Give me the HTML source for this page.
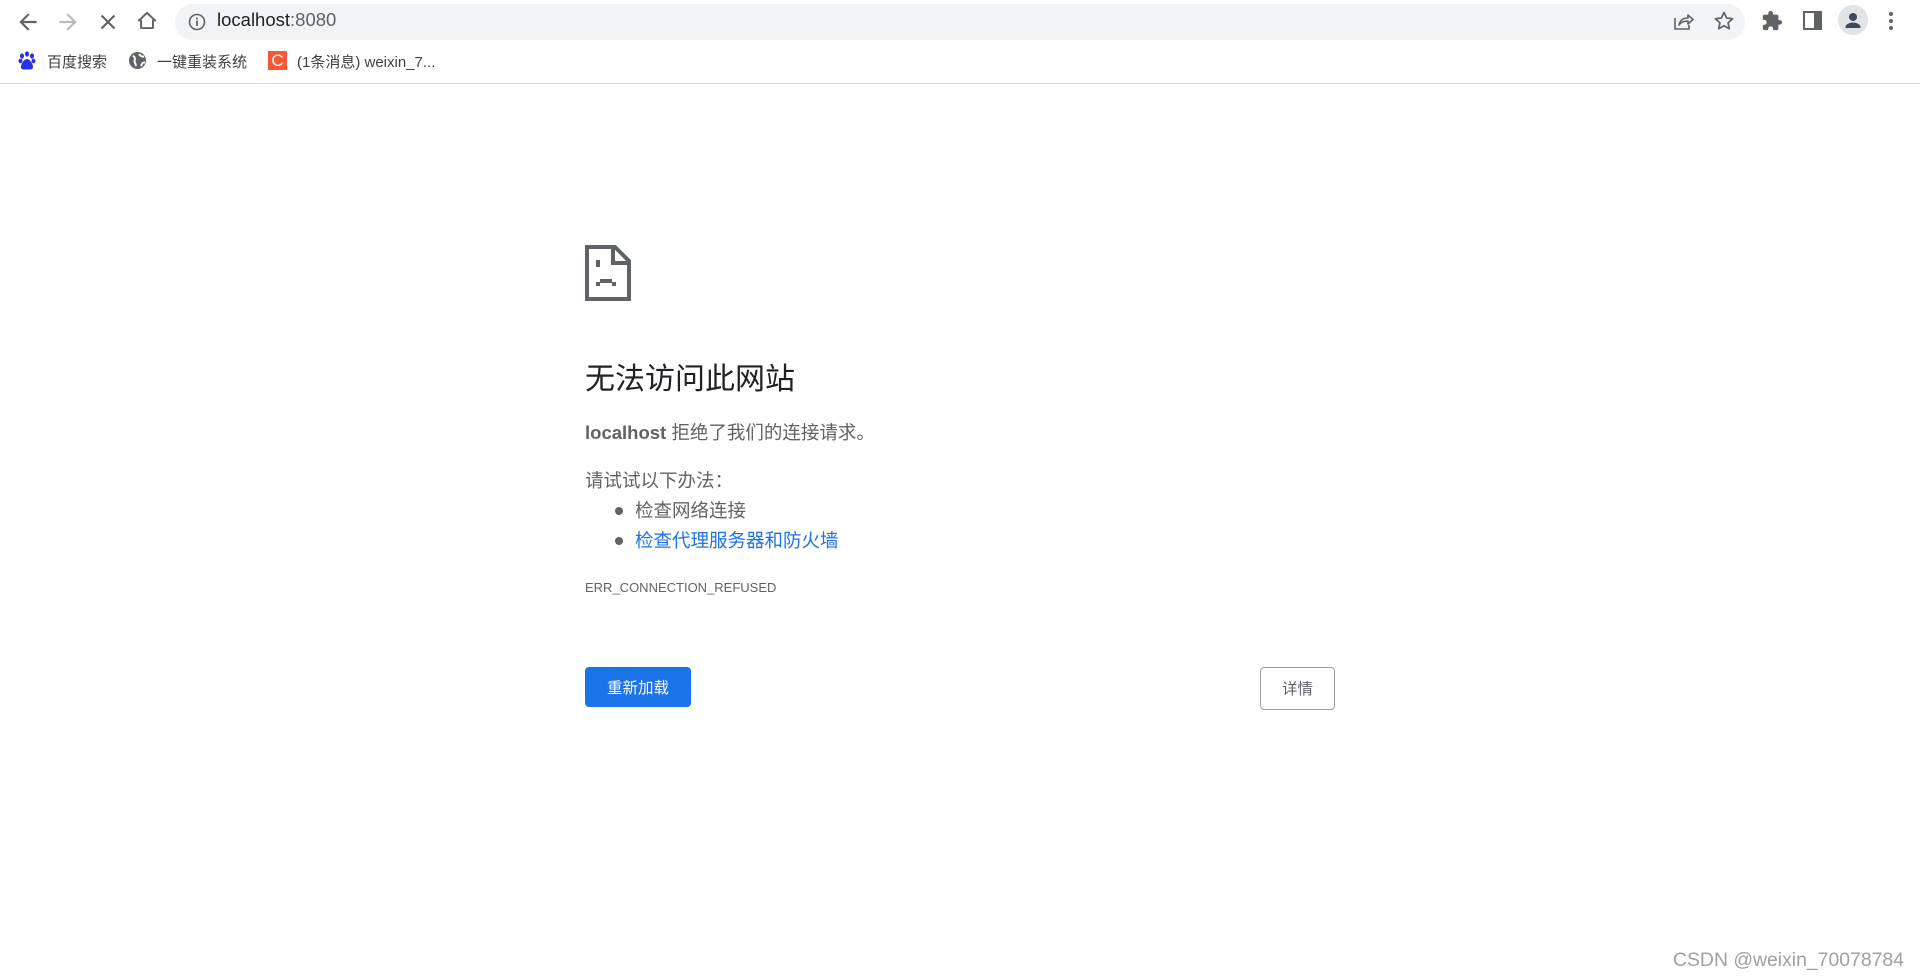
<!DOCTYPE html>
<html><head><meta charset="utf-8"><style>
*{margin:0;padding:0;box-sizing:border-box}
body{width:1920px;height:980px;background:#fff;font-family:"Liberation Sans","Noto Sans CJK SC",sans-serif;position:relative;overflow:hidden;color:#202124}
.top{position:absolute;left:0;top:0;width:1920px;height:84px;border-bottom:1px solid #dadce0;background:#fff}
.abs{position:absolute}
.omni{position:absolute;left:175px;top:4px;width:1570px;height:36px;background:#f1f3f4;border-radius:18px}
.url{position:absolute;left:217px;top:9px;font-size:18.5px;color:#202124}
.url span{color:#5f6368}
.bm{position:absolute;top:51px;font-size:15px;color:#3c4043}
.main{position:absolute;left:585px;top:0;width:750px;color:#5f6368}
h1{position:absolute;top:354px;font-size:30px;font-weight:normal;color:#202124;white-space:nowrap}
.p{position:absolute;font-size:18.5px;white-space:nowrap}
ul{position:absolute;left:0;top:497px;list-style:none}
li{position:relative;font-size:18.5px;height:30px;padding-left:50px}
li:before{content:"";position:absolute;left:30px;top:10px;width:8px;height:8px;border-radius:50%;background:#5f6368}
.btn{position:absolute;top:667px;height:40px;border-radius:4px;font-size:15.5px;text-align:center;line-height:44px}
</style></head><body>
<div class="top">
 <svg class="abs" style="left:15px;top:9px" width="26" height="26" viewBox="0 0 24 24"><path d="M20 11H7.8l5.6-5.6L12 4l-8 8 8 8 1.4-1.4L7.8 13H20z" fill="#5f6368"/></svg>
 <svg class="abs" style="left:55px;top:9px" width="26" height="26" viewBox="0 0 24 24"><path d="M4 11h12.2l-5.6-5.6L12 4l8 8-8 8-1.4-1.4 5.6-5.6H4z" fill="#b9bcbf"/></svg>
 <svg class="abs" style="left:95px;top:9px" width="26" height="26" viewBox="0 0 24 24"><path d="M6 6l12 12M18 6L6 18" stroke="#5f6368" stroke-width="2"/></svg>
 <svg class="abs" style="left:134px;top:8px" width="26" height="26" viewBox="0 0 24 24"><path d="M12 4.5l-7.5 7h2v7h11v-7h2z" fill="none" stroke="#5f6368" stroke-width="1.8" stroke-linejoin="round"/></svg>
 <div class="omni"></div>
 <svg class="abs" style="left:187px;top:12px" width="20" height="20" viewBox="0 0 20 20"><circle cx="10" cy="10" r="7.5" fill="none" stroke="#5f6368" stroke-width="1.6"/><rect x="9.1" y="8.5" width="1.8" height="5.5" fill="#5f6368"/><rect x="9.1" y="5.6" width="1.8" height="1.8" fill="#5f6368"/></svg>
 <div class="url">localhost<span>:8080</span></div>
 <svg class="abs" style="left:1672px;top:10px" width="22" height="22" viewBox="0 0 22 22"><path d="M3 8v11h14v-4" fill="none" stroke="#5f6368" stroke-width="1.6"/><path d="M7 15c1-5 4-7 9-7V5l5 4.5-5 4.5v-3c-4 0-7 1-9 4z" fill="none" stroke="#5f6368" stroke-width="1.6" stroke-linejoin="round"/></svg>
 <svg class="abs" style="left:1712px;top:9px" width="24" height="24" viewBox="0 0 24 24"><path d="M12 3.5l2.6 5.5 6 .7-4.5 4.1 1.2 5.9L12 16.8 6.7 19.7l1.2-5.9L3.4 9.7l6-.7z" fill="none" stroke="#5f6368" stroke-width="1.7" stroke-linejoin="round"/></svg>
 <svg class="abs" style="left:1761px;top:10px" width="22" height="22" viewBox="0 0 24 24"><path d="M20.5 11H19V7a2 2 0 0 0-2-2h-4V3.5a2.5 2.5 0 0 0-5 0V5H4a2 2 0 0 0-2 2v3.8h1.5a2.7 2.7 0 0 1 0 5.4H2V20a2 2 0 0 0 2 2h3.8v-1.5a2.7 2.7 0 0 1 5.4 0V22H17a2 2 0 0 0 2-2v-4h1.5a2.5 2.5 0 0 0 0-5z" fill="#5f6368"/></svg>
 <svg class="abs" style="left:1803px;top:11px" width="19" height="19" viewBox="0 0 19 19"><rect x="1" y="1" width="17" height="17" fill="none" stroke="#5f6368" stroke-width="2"/><rect x="11" y="1" width="7" height="17" fill="#5f6368"/></svg>
 <div class="abs" style="left:1838px;top:5px;width:30px;height:30px;border-radius:50%;background:#e1e3e6"></div>
 <svg class="abs" style="left:1842px;top:9px" width="22" height="22" viewBox="0 0 22 22"><circle cx="11" cy="8" r="4" fill="#3c4a5c"/><path d="M3.5 18c0-3 5-4.5 7.5-4.5s7.5 1.5 7.5 4.5v1h-15z" fill="#3c4a5c"/></svg>
 <svg class="abs" style="left:1887px;top:10px" width="8" height="22" viewBox="0 0 8 22"><circle cx="4" cy="4" r="2" fill="#5f6368"/><circle cx="4" cy="11" r="2" fill="#5f6368"/><circle cx="4" cy="18" r="2" fill="#5f6368"/></svg>
 <svg class="abs" style="left:18px;top:51px" width="18" height="19" viewBox="0 0 18 19"><g fill="#2932e1"><ellipse cx="4" cy="5" rx="2" ry="2.6"/><ellipse cx="9" cy="3" rx="2" ry="2.6"/><ellipse cx="14" cy="5" rx="2" ry="2.6"/><ellipse cx="2.5" cy="10" rx="2" ry="2.3"/><ellipse cx="15.5" cy="10" rx="2" ry="2.3"/><path d="M9 8c-3 0-6 5-6 8s3 2.5 6 2.5 6 .5 6-2.5-3-8-6-8z"/></g></svg>
 <div class="bm" style="left:47px">百度搜索</div>
 <svg class="abs" style="left:128px;top:51px" width="19" height="19" viewBox="0 0 20 20"><circle cx="10" cy="10" r="9" fill="#5f6368"/><path d="M5 5c2 1 3 3 2 5s2 3 1 6M12 3c0 2 3 3 5 3M14 16c0-2 1-4 4-4" stroke="#fff" stroke-width="2" fill="none"/></svg>
 <div class="bm" style="left:157px">一键重装系统</div>
 <div class="abs" style="left:268px;top:51px;width:19px;height:19px;background:#fc5531;color:#fff;font-size:17px;line-height:19px;text-align:center">C</div>
 <div class="bm" style="left:297px">(1条消息) weixin_7...</div>
</div>
<div class="main">
 <svg class="abs" style="left:0;top:245px" width="46" height="56" viewBox="0 0 46 56"><path d="M2 2h28l14 14v38H2z" fill="none" stroke="#5f6368" stroke-width="4"/><path d="M28 2v16h16" fill="none" stroke="#5f6368" stroke-width="4"/><rect x="11" y="15" width="4" height="7" fill="#5f6368"/><rect x="11" y="37" width="4" height="4" fill="#5f6368"/><rect x="15" y="34" width="12" height="4" fill="#5f6368"/><rect x="27" y="37" width="4" height="4" fill="#5f6368"/></svg>
 <h1>无法访问此网站</h1>
 <div class="p" style="top:419px"><b style="color:#5f6368">localhost</b> 拒绝了我们的连接请求。</div>
 <div class="p" style="top:467px">请试试以下办法：</div>
 <ul><li>检查网络连接</li><li style="color:#1a73e8">检查代理服务器和防火墙</li></ul>
 <div class="p" style="top:580px;font-size:13px">ERR_CONNECTION_REFUSED</div>
 <div class="btn" style="left:0;width:106px;background:#1a73e8;color:#fff">重新加载</div>
 <div class="btn" style="left:675px;width:75px;height:43px;border:1px solid #9aa0a6;color:#5f6368;line-height:43px">详情</div>
</div>
<div class="abs" style="left:1673px;top:949px;font-size:19.4px;color:#a0a0a0">CSDN @weixin_70078784</div>
</body></html>
